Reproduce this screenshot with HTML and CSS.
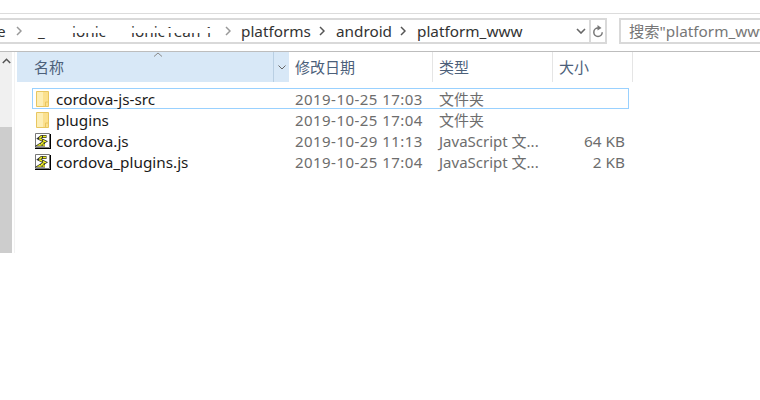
FILE: index.html
```html
<!DOCTYPE html>
<html lang="zh">
<head>
<meta charset="utf-8">
<title>platform_www</title>
<link rel="stylesheet" href="styles.css">
</head>
<body>
<div class="toolbar">
  <div class="address">
    <div class="crumbs">
      <span class="crumb first">e</span>
      <svg class="sep dim" width="6" height="10" viewBox="0 0 6 10"><path d="M1 1l4 4-4 4" fill="none" stroke="#999" stroke-width="1.5"/></svg>
      <div class="smudged">
        <span class="crumb s1">_</span>
        <span class="crumb s2">ionic</span>
        <span class="crumb s3">ionic1ean 1</span>
      </div>
      <svg class="sep dim" width="6" height="10" viewBox="0 0 6 10"><path d="M1 1l4 4-4 4" fill="none" stroke="#999" stroke-width="1.5"/></svg>
      <span class="crumb">platforms</span>
      <svg class="sep" width="6" height="10" viewBox="0 0 6 10"><path d="M1 1l4 4-4 4" fill="none" stroke="#555" stroke-width="1.5"/></svg>
      <span class="crumb">android</span>
      <svg class="sep" width="6" height="10" viewBox="0 0 6 10"><path d="M1 1l4 4-4 4" fill="none" stroke="#555" stroke-width="1.5"/></svg>
      <span class="crumb">platform_www</span>
    </div>
    <div class="drop"><svg width="10" height="6" viewBox="0 0 10 6"><path d="M1 1l4 4 4-4" fill="none" stroke="#666" stroke-width="1.6"/></svg></div>
    <div class="refresh"><svg width="12" height="13" viewBox="0 0 12 13"><path d="M6 3a4.200 4.200 0 1 0 4.200 4.200" fill="none" stroke="#777" stroke-width="1.500"/><path d="M5.500 0L9.500 3 5.500 5.500z" fill="#777"/></svg></div>
  </div>
  <div class="search">搜索"platform_www"</div>
</div>
<div class="main">
  <div class="scrollbar">
    <div class="arrow"><svg width="9" height="6" viewBox="0 0 9 6"><path d="M.8 5l3.700-3.700L8.200 5" fill="none" stroke="#555" stroke-width="1.500"/></svg></div>
    <div class="thumb"></div>
  </div>
  <div class="content">
    <div class="head">
      <div class="h name">
        <span>名称</span>
        <svg class="sort" width="10" height="5" viewBox="0 0 10 5"><path d="M1 4.500l4-3.500 4 3.500" fill="none" stroke="#8a8a8a"/></svg>
        <div class="hdrop"><svg width="8" height="5" viewBox="0 0 8 5"><path d="M.5.500L4 4 7.500.500" fill="none" stroke="#666"/></svg></div>
      </div>
      <div class="h date">修改日期</div>
      <div class="h type">类型</div>
      <div class="h size">大小</div>
    </div>
    <div class="rows">
      <div class="row selected">
        <div class="c name"><svg class="ico" viewBox="0 0 16 16"><use href="#folder"/></svg><span>cordova-js-src</span></div>
        <div class="c date">2019-10-25 17:03</div><div class="c type">文件夹</div><div class="c size"></div>
      </div>
      <div class="row">
        <div class="c name"><svg class="ico" viewBox="0 0 16 16"><use href="#folder"/></svg><span>plugins</span></div>
        <div class="c date">2019-10-25 17:04</div><div class="c type">文件夹</div><div class="c size"></div>
      </div>
      <div class="row">
        <div class="c name"><svg class="ico" viewBox="0 0 16 16"><use href="#script"/></svg><span>cordova.js</span></div>
        <div class="c date">2019-10-29 11:13</div><div class="c type">JavaScript 文...</div><div class="c size">64 KB</div>
      </div>
      <div class="row">
        <div class="c name"><svg class="ico" viewBox="0 0 16 16"><use href="#script"/></svg><span>cordova_plugins.js</span></div>
        <div class="c date">2019-10-25 17:04</div><div class="c type">JavaScript 文...</div><div class="c size">2 KB</div>
      </div>
    </div>
  </div>
</div>
<svg class="defs" width="0" height="0">
  <symbol id="folder" viewBox="0 0 16 16">
    <path d="M1.500 .5h12v15h-12z" fill="#fbe08e" stroke="#e8c660"/>
    <path d="M2 1h6v14H2z" fill="#fdeeb5"/>
    <path d="M10.500 15V11h3" fill="none" stroke="#e8c660"/>
  </symbol>
  <symbol id="script" viewBox="0 0 16 16">
    <path d="M.5.500h14v14H.5z" fill="#fff" stroke="#777"/>
    <path d="M0 15h16v1H0zM15 1h1v15h-1z" fill="#000"/>
    <path d="M11.500 3.500H6.500L4 5.500l6 3-5.500 3.500H10" fill="none" stroke="#333" stroke-width="3"/>
    <path d="M11 3.500H6.500L4 5.500l6 3-5.500 3.500H10" fill="none" stroke="#f0f020" stroke-width="1.600" stroke-dasharray="3 1"/>
  </symbol>
</svg>
</body>
</html>
```
FILE: styles.css
```css
* { box-sizing: border-box; }
html, body { margin: 0; padding: 0; }
body {
  width: 760px;
  height: 400px;
  overflow: hidden;
  background: #fff;
  font-family: "Noto Sans", "Noto Sans CJK SC", sans-serif;
  font-size: 15.3px;
}
.toolbar {
  margin-top: 13px;
  border-top: 1px solid #dcdcdc;
  border-bottom: 1px solid #bdbdbd;
  height: 39px;
  padding-top: 4px;
  display: flex;
  width: 760px;
}
.address {
  width: 607px;
  height: 26px;
  border: solid #d9d9d9;
  border-width: 2px 2px 2px 0;
  display: flex;
  align-items: center;
  flex: none;
}
.crumbs {
  flex: 1;
  display: flex;
  align-items: center;
  overflow: hidden;
  color: #333;
  white-space: nowrap;
}
.crumb { flex: none; }
.first { margin-left: -3px; width: 8px; }
.sep { flex: none; margin: 0 11px 0 8px; }
.sep.dim { margin: 0 10px 0 11px; }
.smudged {
  position: relative;
  flex: none;
  width: 182px;
  display: flex;
  overflow: hidden;
}
.smudged::after {
  content: "";
  position: absolute;
  left: 0;
  right: 0;
  top: 7px;
  height: 5px;
  background: #fff;
}
.s1 { margin-left: 6px; width: 34px; }
.s2 { width: 59px; }
.drop { width: 16px; display: flex; justify-content: center; }
.refresh {
  width: 16px; height: 22px;
  border-left: 2px solid #d9d9d9;
  display: flex; align-items: center; justify-content: center;
  flex: none;
}
.search {
  margin-left: 12px;
  flex: 1;
  height: 26px;
  border: 2px solid #d9d9d9;
  border-right: 0;
  color: #777;
  padding-left: 8px;
  line-height: 22px;
  overflow: hidden;
  white-space: nowrap;
}
.main { display: flex; height: 201px; }
.scrollbar {
  width: 12px;
  background: #f0f0f0;
  height: 201px;
  display: flex;
  flex-direction: column;
  align-items: center;
  flex: none;
}
.arrow { height: 75px; padding-top: 6px; line-height: 0; }
.thumb { width: 12px; height: 126px; background: #cdcdcd; }
.content {
  margin-left: 2px;
  flex: 1;
  border-left: 1px solid #f2f2f2;
  padding-left: 2px;
}
.head { display: flex; height: 30px; color: #4c607a; font-size: 15px; }
.h { line-height: 30px; border-right: 1px solid #e5e5e5; flex: none; padding-left: 6px; }
.h.name {
  width: 272px;
  background: #d8e8f7;
  border-right: 0;
  padding-left: 17px;
  position: relative;
}
.sort { position: absolute; left: 136px; top: 0; }
.hdrop {
  position: absolute; right: 0; top: 0; bottom: 0; width: 16px;
  border-left: 1px solid #b9cfe3;
  display: flex; align-items: center; justify-content: center;
}
.h.date { width: 144px; }
.h.type { width: 120px; }
.h.size { width: 80px; }
.rows { padding-top: 6px; }
.row {
  display: flex;
  height: 21px;
  width: 597px;
  margin-left: 15px;
  color: #6d6d6d;
  border: 1px solid transparent;
  align-items: center;
  white-space: nowrap;
}
.row.selected { border-color: #99d1ff; }
.c { flex: none; }
.c.name { width: 262px; display: flex; align-items: center; color: #1a1a1a; }
.ico { width: 16px; height: 16px; margin-left: 2px; margin-right: 5px; flex: none; }
.c.date { width: 144px; letter-spacing: .45px; font-size: 15px; }
.c.type { width: 116px; font-size: 15px; }
.c.size { width: 70px; text-align: right; }
.defs { position: absolute; }
```
